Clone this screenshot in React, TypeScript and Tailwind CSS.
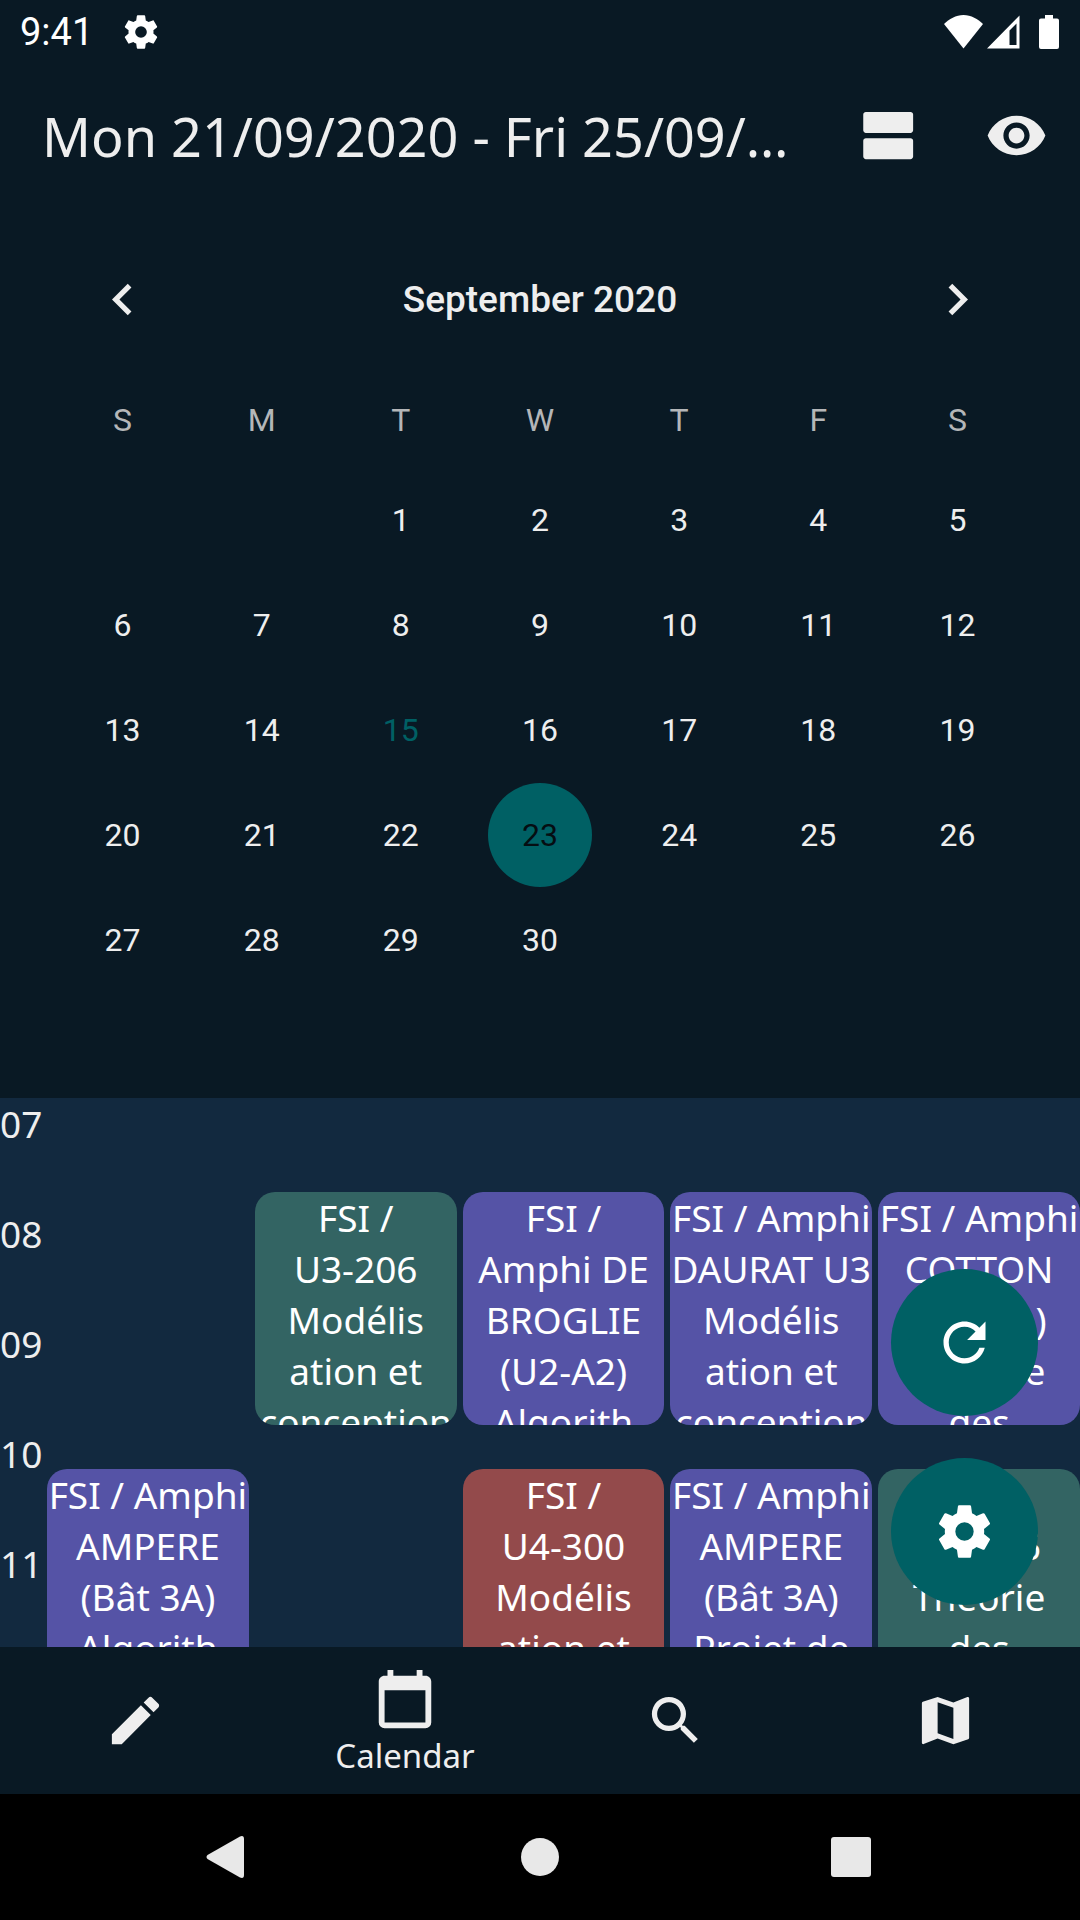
import { useState } from "react";
import type { ReactNode } from "react";

type IconProps = { d: string; className: string };

function Icon({ d, className }: IconProps) {
  return (
    <svg viewBox="0 0 24 24" fill="currentColor" aria-hidden="true" className={className}>
      <path fillRule="evenodd" d={d} />
    </svg>
  );
}

const icons = {
  cog: "M12,15.5A3.5,3.5 0 0,1 8.5,12A3.5,3.5 0 0,1 12,8.5A3.5,3.5 0 0,1 15.5,12A3.5,3.5 0 0,1 12,15.5M19.43,12.97C19.47,12.65 19.5,12.33 19.5,12C19.5,11.67 19.47,11.34 19.43,11L21.54,9.37C21.73,9.22 21.78,8.95 21.66,8.73L19.66,5.27C19.54,5.05 19.27,4.96 19.05,5.05L16.56,6.05C16.04,5.66 15.5,5.32 14.87,5.07L14.5,2.42C14.46,2.18 14.25,2 14,2H10C9.75,2 9.54,2.18 9.5,2.42L9.13,5.07C8.5,5.32 7.96,5.66 7.44,6.05L4.95,5.05C4.73,4.96 4.46,5.05 4.34,5.27L2.34,8.73C2.21,8.95 2.27,9.22 2.46,9.37L4.57,11C4.53,11.34 4.5,11.67 4.5,12C4.5,12.33 4.53,12.65 4.57,12.97L2.46,14.63C2.27,14.78 2.21,15.05 2.34,15.27L4.34,18.73C4.46,18.95 4.73,19.03 4.95,18.95L7.44,17.94C7.96,18.34 8.5,18.68 9.13,18.93L9.5,21.58C9.54,21.82 9.75,22 10,22H14C14.25,22 14.46,21.82 14.5,21.58L14.87,18.93C15.5,18.67 16.04,18.34 16.56,17.94L19.05,18.95C19.27,19.03 19.54,18.95 19.66,18.73L21.66,15.27C21.78,15.05 21.73,14.78 21.54,14.63L19.43,12.97Z",
  agenda:
    "M20 13H3c-.55 0-1 .45-1 1v6c0 .55.45 1 1 1h17c.55 0 1-.45 1-1v-6c0-.55-.45-1-1-1zm0-10H3c-.55 0-1 .45-1 1v6c0 .55.45 1 1 1h17c.55 0 1-.45 1-1V4c0-.55-.45-1-1-1z",
  eye: "M12 4.5C7 4.5 2.73 7.61 1 12c1.73 4.39 6 7.5 11 7.5s9.27-3.11 11-7.5c-1.73-4.39-6-7.5-11-7.5zM12 17c-2.76 0-5-2.24-5-5s2.24-5 5-5 5 2.24 5 5-2.24 5-5 5zM12 9c-1.66 0-3 1.34-3 3s1.34 3 3 3 3-1.34 3-3-1.34-3-3-3z",
  left: "M15.41 7.41L14 6l-6 6 6 6 1.41-1.41L10.83 12z",
  right: "M10 6L8.59 7.41 13.17 12l-4.58 4.59L10 18l6-6z",
  refresh:
    "M17.65 6.35C16.2 4.9 14.21 4 12 4c-4.42 0-7.99 3.58-7.99 8s3.57 8 7.99 8c3.73 0 6.84-2.55 7.73-6h-2.08c-.82 2.33-3.04 4-5.65 4-3.31 0-6-2.69-6-6s2.69-6 6-6c1.66 0 3.14.69 4.22 1.78L13 11h7V4l-2.35 2.35z",
  pencil:
    "M20.71,7.04C21.1,6.65 21.1,6 20.71,5.63L18.37,3.29C18,2.9 17.35,2.9 16.96,3.29L15.12,5.12L18.87,8.87M3,17.25V21H6.75L17.81,9.93L14.06,6.18L3,17.25Z",
  calendar:
    "M19,19H5V8H19M16,1V3H8V1H6V3H5C3.89,3 3,3.89 3,5V19A2,2 0 0,0 5,21H19A2,2 0 0,0 21,19V5C21,3.89 20.1,3 19,3H18V1",
  search:
    "M9.5,3A6.5,6.5 0 0,1 16,9.5C16,11.11 15.41,12.59 14.44,13.73L14.71,14H15.5L20.5,19L19,20.5L14,15.5V14.71L13.73,14.44C12.59,15.41 11.11,16 9.5,16A6.5,6.5 0 0,1 3,9.5A6.5,6.5 0 0,1 9.5,3M9.5,5C7,5 5,7 5,9.5C5,12 7,14 9.5,14C12,14 14,12 14,9.5C14,7 12,5 9.5,5Z",
  map: "M20.5 3l-.16.03L15 5.1 9 3 3.36 4.9c-.21.07-.36.25-.36.48V20.5c0 .28.22.5.5.5l.16-.03L9 18.9l6 2.1 5.64-1.9c.21-.07.36-.25.36-.48V3.5c0-.28-.22-.5-.5-.5zM15 19l-6-2.11V5l6 2.11V19z",
};

function StatusBar() {
  return (
    <div className="flex h-[63px] shrink-0 items-center pr-[21px] pl-5 font-[Roboto,sans-serif] text-white">
      <span className="text-[38px] leading-[40px]">9:41</span>
      <Icon d={icons.cog} className="ml-7 size-[40px]" />
      <div className="ml-auto flex items-center">
        <svg viewBox="0 0 39 34" fill="currentColor" aria-hidden="true" className="mr-1 h-[34px] w-[39px]">
          <path d="M0 9C5 4 12 0 19.500 0S34 4 39 9L19.500 33.500z" />
        </svg>
        <svg viewBox="0 0 33 34" fill="currentColor" aria-hidden="true" className="mr-[19px] h-[34px] w-[33px]">
          <path fillRule="evenodd" d="M0 33.500L32.500 0.500V33.500zM22.500 15.500V30H29.500V8.500z" />
        </svg>
        <svg viewBox="0 0 20 34" fill="currentColor" aria-hidden="true" className="h-[34px] w-5">
          <path d="M6 0h8v3.500h4a2 2 0 0 1 2 2V32a2 2 0 0 1-2 2H2a2 2 0 0 1-2-2V5.500a2 2 0 0 1 2-2h4z" />
        </svg>
      </div>
    </div>
  );
}

function Header() {
  return (
    <header className="flex h-[145px] shrink-0 items-center pr-8 pl-[42px]">
      <h1 className="flex-1 truncate text-[54px] leading-[74px]">Mon 21/09/2020 - Fri 25/09/…</h1>
      <button type="button" aria-label="Change view">
        <Icon d={icons.agenda} className="size-[63px]" />
      </button>
      <button type="button" aria-label="Show or hide calendar" className="ml-16">
        <Icon d={icons.eye} className="size-[63px]" />
      </button>
    </header>
  );
}

const weekdays = ["S", "M", "T", "W", "T", "F", "S"];
const weeks = [0, 1, 2, 3, 4].map((w) => weekdays.map((_, d) => w * 7 + d - 1));

function MonthCalendar() {
  const [selected, setSelected] = useState(23);
  return (
    <section className="shrink-0 px-[53px] pt-[34px] pb-[106px] font-[Roboto,sans-serif]">
      <div className="mb-4 grid h-[115px] grid-cols-7 items-center">
        <button type="button" aria-label="Previous month" className="flex justify-center">
          <Icon d={icons.left} className="size-[63px]" />
        </button>
        <h2 className="col-span-5 text-center text-[37px] leading-[44px] font-medium">September 2020</h2>
        <button type="button" aria-label="Next month" className="flex justify-center">
          <Icon d={icons.right} className="size-[63px]" />
        </button>
      </div>
      <table className="w-full table-fixed border-collapse text-center text-[32px] leading-[38px]">
        <thead>
          <tr className="h-[94px] text-[#b4b6b8]">
            {weekdays.map((d, i) => (
              <th key={i} scope="col" className="p-0 font-normal">
                {d}
              </th>
            ))}
          </tr>
        </thead>
        <tbody>
          {weeks.map((week, w) => (
            <tr key={w} className="h-[105px]">
              {week.map((day, i) => (
                <td key={i} className="p-0">
                  {day >= 1 && day <= 30 && (
                    <button
                      type="button"
                      aria-pressed={day === selected}
                      onClick={() => setSelected(day)}
                      className={
                        day === selected
                          ? "mx-auto block size-[104px] rounded-full bg-[#006064] text-[#050d12]"
                          : day === 15
                            ? "mx-auto block size-[104px] rounded-full text-[#006064]"
                            : "mx-auto block size-[104px] rounded-full"
                      }
                    >
                      {day}
                    </button>
                  )}
                </td>
              ))}
            </tr>
          ))}
        </tbody>
      </table>
    </section>
  );
}

const green = "bg-[#336463]";
const purple = "bg-[#5553a6]";
const red = "bg-[#934a4b]";

type Course = { color: string; lines: string[] } | null;

const days: [Course, Course][] = [
  [null, { color: purple, lines: ["FSI / Amphi", "AMPERE", "(Bât 3A)", "Algorith"] }],
  [{ color: green, lines: ["FSI /", "U3-206", "Modélis", "ation et", "conception"] }, null],
  [
    { color: purple, lines: ["FSI /", "Amphi DE", "BROGLIE", "(U2-A2)", "Algorith"] },
    { color: red, lines: ["FSI /", "U4-300", "Modélis", "ation et"] },
  ],
  [
    { color: purple, lines: ["FSI / Amphi", "DAURAT U3", "Modélis", "ation et", "conception"] },
    { color: purple, lines: ["FSI / Amphi", "AMPERE", "(Bât 3A)", "Projet de"] },
  ],
  [
    { color: purple, lines: ["FSI / Amphi", "COTTON", "(Bât 3A)", "Théorie", "des"] },
    { color: green, lines: ["FSI /", "U3-206", "Théorie", "des"] },
  ],
];

function CourseCard({ course }: { course: Course }) {
  if (!course) return <div className="h-[233px] shrink-0" />;
  return (
    <div className={`${course.color} h-[233px] shrink-0 overflow-hidden rounded-[20px] text-center text-white`}>
      {course.lines.map((line) => (
        <div key={line} className="flex justify-center whitespace-nowrap">
          {line}
        </div>
      ))}
    </div>
  );
}

function Fab({ label, children }: { label: string; children: ReactNode }) {
  return (
    <button
      type="button"
      aria-label={label}
      className="flex size-[147px] items-center justify-center rounded-full bg-[#006064] text-white"
    >
      {children}
    </button>
  );
}

function Timetable() {
  return (
    <main className="relative min-h-0 flex-1 overflow-hidden bg-[#12293f] text-[37px] leading-[51px]">
      <div className="flex">
        <div className="w-[47px] shrink-0">
          {["07", "08", "09", "10", "11"].map((h) => (
            <div key={h} className="h-[110px]">
              {h}
            </div>
          ))}
        </div>
        <div className="grid flex-1 grid-cols-5 gap-[6px] pt-[94px]">
          {days.map((courses, i) => (
            <div key={i} className="flex min-w-0 flex-col gap-11">
              <CourseCard course={courses[0]} />
              <CourseCard course={courses[1]} />
            </div>
          ))}
        </div>
      </div>
      <div className="absolute right-[42px] bottom-[42px] flex flex-col gap-[42px]">
        <Fab label="Refresh">
          <Icon d={icons.refresh} className="size-[63px]" />
        </Fab>
        <Fab label="Settings">
          <Icon d={icons.cog} className="size-[63px]" />
        </Fab>
      </div>
    </main>
  );
}

function TabBar() {
  return (
    <nav className="grid h-[147px] shrink-0 grid-cols-4">
      <a href="#groups" aria-label="Groups" className="flex items-center justify-center">
        <Icon d={icons.pencil} className="size-[63px]" />
      </a>
      <a href="#calendar" aria-current="page" className="flex flex-col items-center justify-center">
        <Icon d={icons.calendar} className="size-[70px]" />
        <span className="text-[33px] leading-[38px]">Calendar</span>
      </a>
      <a href="#search" aria-label="Search" className="flex items-center justify-center">
        <Icon d={icons.search} className="size-[63px]" />
      </a>
      <a href="#map" aria-label="Map" className="flex items-center justify-center">
        <Icon d={icons.map} className="size-[63px]" />
      </a>
    </nav>
  );
}

function SystemBar() {
  return (
    <div className="flex h-[126px] shrink-0 items-center justify-between bg-black pr-[209px] pl-[206px] text-[#e8e8e8]">
      <button type="button" aria-label="Back" className="w-[42px]">
        <svg viewBox="0 0 38 44" fill="currentColor" aria-hidden="true" className="h-[44px] w-[38px]">
          <path d="M1.500 20L34 1.500Q38 0 38 4V40Q38 44 34 42.500L1.500 24Q-0.500 22 1.500 20z" />
        </svg>
      </button>
      <button type="button" aria-label="Home" className="size-[38px] rounded-full bg-[#e8e8e8]" />
      <button type="button" aria-label="Recent apps" className="size-10 rounded-[3px] bg-[#e8e8e8]" />
    </div>
  );
}

export default function App() {
  return (
    <div className="flex h-screen min-h-[1700px] flex-col bg-[#091924] font-['Noto_Sans',sans-serif] text-[#eeeeee]">
      <StatusBar />
      <Header />
      <MonthCalendar />
      <Timetable />
      <TabBar />
      <SystemBar />
    </div>
  );
}
